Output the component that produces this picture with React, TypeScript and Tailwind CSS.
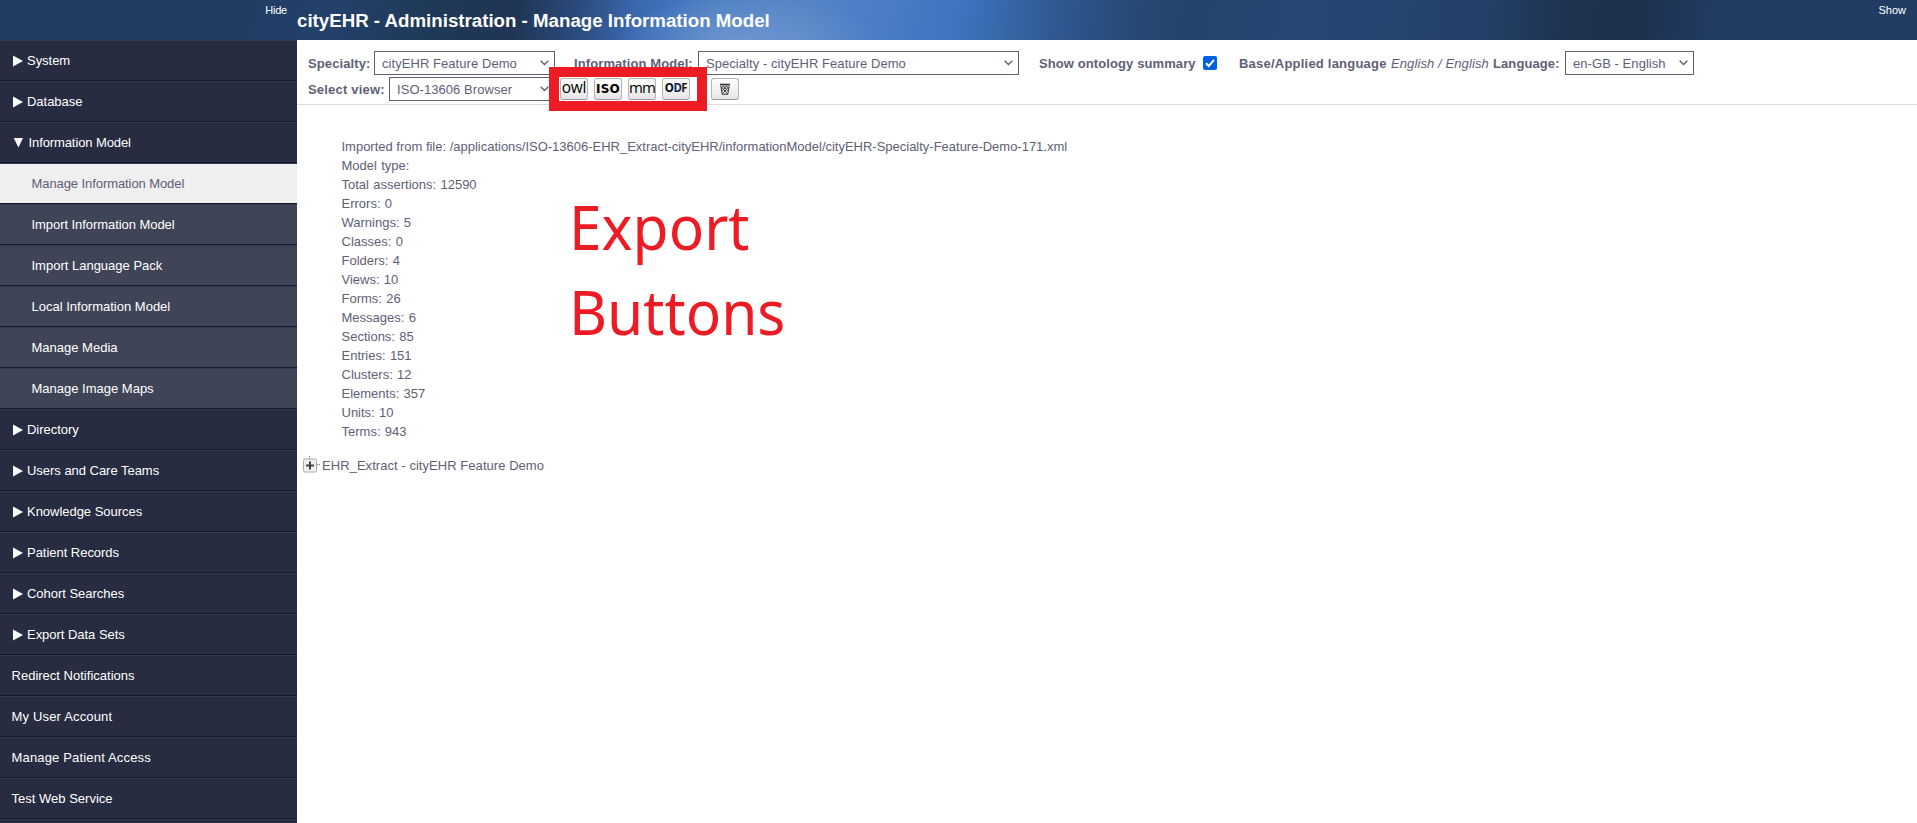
import React from "react";

const top = ["System", "Database"];
const sub = ["Manage Information Model", "Import Information Model", "Import Language Pack", "Local Information Model", "Manage Media", "Manage Image Maps"];
const more = ["Directory", "Users and Care Teams", "Knowledge Sources", "Patient Records", "Cohort Searches", "Export Data Sets"];
const plain = ["Redirect Notifications", "My User Account", "Manage Patient Access", "Test Web Service"];
const source = "Imported from file: /applications/ISO-13606-EHR_Extract-cityEHR/informationModel/cityEHR-Specialty-Feature-Demo-171.xml";
const summary = [
  "Model type:", "Total assertions: 12590", "Errors: 0", "Warnings: 5", "Classes: 0", "Folders: 4", "Views: 10", "Forms: 26",
  "Messages: 6", "Sections: 85", "Entries: 151", "Clusters: 12", "Elements: 357", "Units: 10", "Terms: 943",
];

const row = "flex h-[41px] shrink-0 items-center whitespace-pre border-t border-b border-t-[#303a58] border-b-[#151a29] ";

function Group({ label, open }: { label: string; open?: boolean }) {
  return (
    <div className={row + "bg-[#272c40] pl-[13px] text-white"}>
      <svg width="11" height="12" viewBox="0 0 11 12" fill="white" className="shrink-0">
        {open ? <path d="M.8 1H10L5.4 10.5Z" /> : <path d="M0 .5L10 6L0 11.5Z" />}
      </svg>
      <span className={open ? "ml-[4.5px] tracking-[-0.1px]" : "ml-[3px] tracking-[-0.03px]"}>{label}</span>
    </div>
  );
}

function Select({ label, className }: { label: string; className: string }) {
  return (
    <div className={"flex h-6 shrink-0 items-center justify-between border border-[#5f6076] bg-white pl-[7px] pr-[5px] " + className}>
      <span className="pt-px tracking-[0.06px]">{label}</span>
      <svg width="9" height="6" viewBox="0 0 9 6" fill="none" stroke="#5f6076" strokeWidth="1.4"><path d="M.7 .8L4.5 4.6L8.3 .8" /></svg>
    </div>
  );
}

const button = "flex h-[22px] w-7 shrink-0 items-center justify-center rounded-[3px] border border-[#b4b4b4] border-b-[#9c9c9c] bg-linear-to-b from-white to-[#e6e6e6] leading-none text-black ";
const label = "pt-px tracking-[0.1px] ";

export default function App() {
  return (
    <div className="relative flex h-[823px] w-[1917px] flex-col overflow-hidden bg-white font-['Liberation_Sans',Arial,sans-serif] text-[13px] text-[#5f6076]">
      <header className="flex h-10 shrink-0 bg-[radial-gradient(ellipse_130px_50px_at_745px_44px,#7ba0d6b0,#7ba0d600),linear-gradient(98deg,#223d64_0px,#223d64_250px,#24416a_330px,#1f3856_440px,#1f3553_510px,#2b4b7d_575px,#3a68ae_630px,#4272bb_665px,#5080c3_710px,#5583c6_800px,#4b7cc5_880px,#3f73bd_955px,#315c98_1035px,#284b79_1110px,#234469_1180px,#264774_1290px,#234169_1470px,#1f3553_1540px,#1d304d_1620px,#223b62_1700px,#223d64_1917px)] text-white">
        <div className="w-[297px] pr-[10px] pt-[4px] text-right text-[11px] leading-[13px] tracking-[-0.2px]">Hide</div>
        <h1 className="flex-1 text-[18.7px] font-bold leading-[41px]">cityEHR - Administration - Manage Information Model</h1>
        <div className="pr-[11px] pt-[4px] text-[11px] leading-[13px]">Show</div>
      </header>
      <div className="flex min-h-0 flex-1">
        <nav className="flex w-[297px] shrink-0 flex-col overflow-hidden bg-[#272c40]">
          {top.map((t) => <Group key={t} label={t} />)}
          <Group label="Information Model" open />
          {sub.map((t, i) => (
            <div key={t} className={row + (i === 0 ? "bg-[#efefef] pl-[31.5px] tracking-[-0.08px] text-[#5f6076]" : i === 1 ? "bg-[#404457] pl-[31.5px] tracking-[-0.06px] text-white" : "bg-[#404457] pl-[31.5px] text-white")}>{t}</div>
          ))}
          {more.map((t) => <Group key={t} label={t} />)}
          {plain.map((t, i) => <div key={t} className={row + "bg-[#272c40] pl-[11.5px] text-white " + (i === 1 || i === 2 ? "tracking-[0.17px]" : "tracking-[0.01px]")}>{t}</div>)}
          <div className={row + "bg-[#272c40]"} />
        </nav>
        <main className="min-w-0 flex-1">
          <div className="flex h-[65px] flex-col gap-[2px] border-b border-[#dcdcdc] pl-[11px] pt-[11px]">
            <div className="flex items-center whitespace-nowrap">
              <b className={label + "w-[66px]"}>Specialty:</b>
              <Select label="cityEHR Feature Demo" className="w-[181px]" />
              <b className={label + "ml-[19px] w-[124px]"}>Information Model:</b>
              <Select label="Specialty - cityEHR Feature Demo" className="w-[321px]" />
              <b className={label + "ml-5 w-[164px]"}>Show ontology summary</b>
              <svg width="14" height="14" viewBox="0 0 14 14"><rect width="14" height="14" rx="2" fill="#0061e0" /><path d="M3 7.2L5.8 10L11 3.8" fill="none" stroke="white" strokeWidth="2" /></svg>
              <b className="ml-[22px] w-[152px] pt-px tracking-[0.22px]">Base/Applied language</b>
              <i className={label + "w-[102px]"}>English / English</i>
              <b className={label + "w-[72px]"}>Language:</b>
              <Select label="en-GB - English" className="w-[129px]" />
            </div>
            <div className="flex items-center whitespace-nowrap">
              <b className="w-[81px] pt-px tracking-[0.2px]">Select view:</b>
              <Select label="ISO-13606 Browser" className="w-[166px]" />
              <div className="ml-[5px] flex gap-[6px]">
                <div className={button + "font-['Open_Sans',sans-serif] text-[15.5px]"}><span className="-mt-[2px] tracking-[-0.3px]">owl</span></div>
                <div className={button + "font-['DejaVu_Sans',sans-serif] text-[12px] font-bold"}><span className="-mt-px tracking-[0.2px]">ISO</span></div>
                <div className={button + "font-['Open_Sans',sans-serif] text-[15px]"}><span className="-mt-[3px] tracking-[-0.8px]">mm</span></div>
                <div className={button + "font-['Noto_Sans',sans-serif] text-[11.5px] font-bold"}><span className="-mt-[2px] tracking-[-0.5px]"><span className="text-[#000a18]">O</span><span className="text-[#0b2a5c]">D</span><span className="text-[#2c1608]">F</span></span></div>
              </div>
              <div className={button + "ml-[21px]"}>
                <svg width="12" height="12" viewBox="0 0 12 12" fill="none" stroke="#3c3c3c"><path d="M1 1.5H11" strokeWidth="1.6" /><path d="M1.8 2.5L3.2 11.3H8.8L10.2 2.5" /><path d="M2.5 4L8.5 11M4 2.5L9.2 8.5M7 2.5L9.7 5.5M9.5 4L3.5 11M8 2.5L2.8 8.5M5 2.5L2.3 5.5" strokeWidth="1" /></svg>
              </div>
            </div>
          </div>
          <div className="pl-[44.5px] pt-[32px] leading-[19px]">
            <div className="whitespace-nowrap tracking-[-0.01px]">{source}</div>
            {summary.map((s) => <div key={s} className="whitespace-nowrap [word-spacing:0.7px]"><span>{s}</span></div>)}
          </div>
          <div className="mt-[15px] flex items-center whitespace-nowrap pl-[6px] leading-[19px]">
            <svg width="18" height="17" viewBox="0 0 18 17" className="-mt-[3px]"><path d="M6.5 0V1M6.5 2V3M14 8.5H15M16 8.5H17" stroke="#777" /><rect x=".5" y="3" width="13" height="13" rx="1.5" fill="#f0f0f0" stroke="#aaa" /><path d="M3 9.5H11M7 5.5V13.5" stroke="#444" strokeWidth="2" /></svg>
            <span className="ml-px tracking-[0.05px]">EHR_Extract - cityEHR Feature Demo</span>
          </div>
        </main>
      </div>
      <div className="absolute left-[549px] top-[67px] h-[44px] w-[158px] border-10 border-[#ed1c24]" />
      <div className="absolute left-[568.5px] top-[182.5px] origin-left scale-x-[0.938] font-['Noto_Sans',sans-serif] text-[62.5px] leading-[85px] text-[#ed1c24]"><div>Export</div><div>Buttons</div></div>
    </div>
  );
}
